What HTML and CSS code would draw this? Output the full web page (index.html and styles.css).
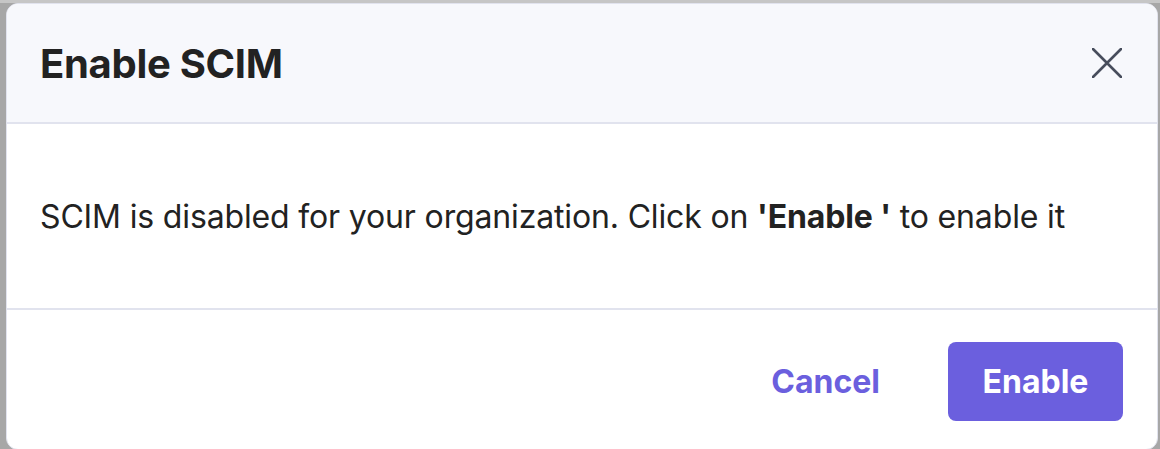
FILE: index.html
```html
<!DOCTYPE html>
<html lang="en">
<head>
  <meta charset="UTF-8">
  <title>Enable SCIM</title>
  <link rel="stylesheet" href="styles.css">
</head>
<body>
  <div class="modal">
    <div class="modal-header">
      <h1>Enable SCIM</h1>
      <button class="close-btn" aria-label="Close">
        <svg width="30" height="30" viewBox="0 0 30 30">
          <path d="M1 1 L29 29 M29 1 L1 29" stroke="#474d5c" stroke-width="2.6" stroke-linecap="round" fill="none"/>
        </svg>
      </button>
    </div>
    <div class="modal-body">
      <p>SCIM is disabled for your organization. Click on <b>'Enable '</b> to enable it</p>
    </div>
    <div class="modal-footer">
      <button class="btn-link">Cancel</button>
      <button class="btn-primary">Enable</button>
    </div>
  </div>
</body>
</html>
```

FILE: styles.css
```css
body {
  margin: 0;
  padding: 3px 0 0 6px;
  font-family: Inter, "Noto Sans", sans-serif;
  background: linear-gradient(#c6c6c6 0 3px, #a7a7a7 3px);
  height: 449px;
  box-sizing: border-box;
  overflow: hidden;
}

.modal {
  width: 1152px;
  height: 447px;
  box-sizing: border-box;
  background: #fff;
  border: 1px solid #e1e3ee;
  border-radius: 12px;
  overflow: hidden;
  display: flex;
  flex-direction: column;
}

.modal-header {
  height: 120px;
  flex-shrink: 0;
  background: #f7f8fc;
  border-bottom: 2px solid #e1e3ee;
  display: flex;
  align-items: center;
  justify-content: space-between;
  padding: 0 35px 0 33px;
  box-sizing: border-box;
}

.modal-header h1 {
  margin: 0;
  font-size: 40px;
  font-weight: 700;
  color: #222;
  letter-spacing: -0.3px;
}

.close-btn {
  background: none;
  border: none;
  padding: 0;
  display: flex;
  cursor: pointer;
}

.modal-body {
  height: 186px;
  flex-shrink: 0;
  border-bottom: 2px solid #e1e3ee;
  display: flex;
  align-items: center;
  padding: 0 33px;
  box-sizing: border-box;
}

.modal-body p {
  margin: 0;
  font-size: 32px;
  letter-spacing: -0.15px;
  color: #222;
}

.modal-footer {
  flex: 1;
  display: flex;
  align-items: flex-start;
  justify-content: flex-end;
  gap: 68px;
  padding: 32px 34px 0 0;
}

.btn-link {
  background: none;
  border: none;
  padding: 0;
  height: 79px;
  font-family: inherit;
  font-size: 32px;
  font-weight: 700;
  color: #6b5fde;
  cursor: pointer;
}

.btn-primary {
  width: 175px;
  height: 79px;
  background: #6b5fde;
  border: none;
  border-radius: 8px;
  font-family: inherit;
  font-size: 32px;
  font-weight: 700;
  color: #fff;
  cursor: pointer;
}
```
